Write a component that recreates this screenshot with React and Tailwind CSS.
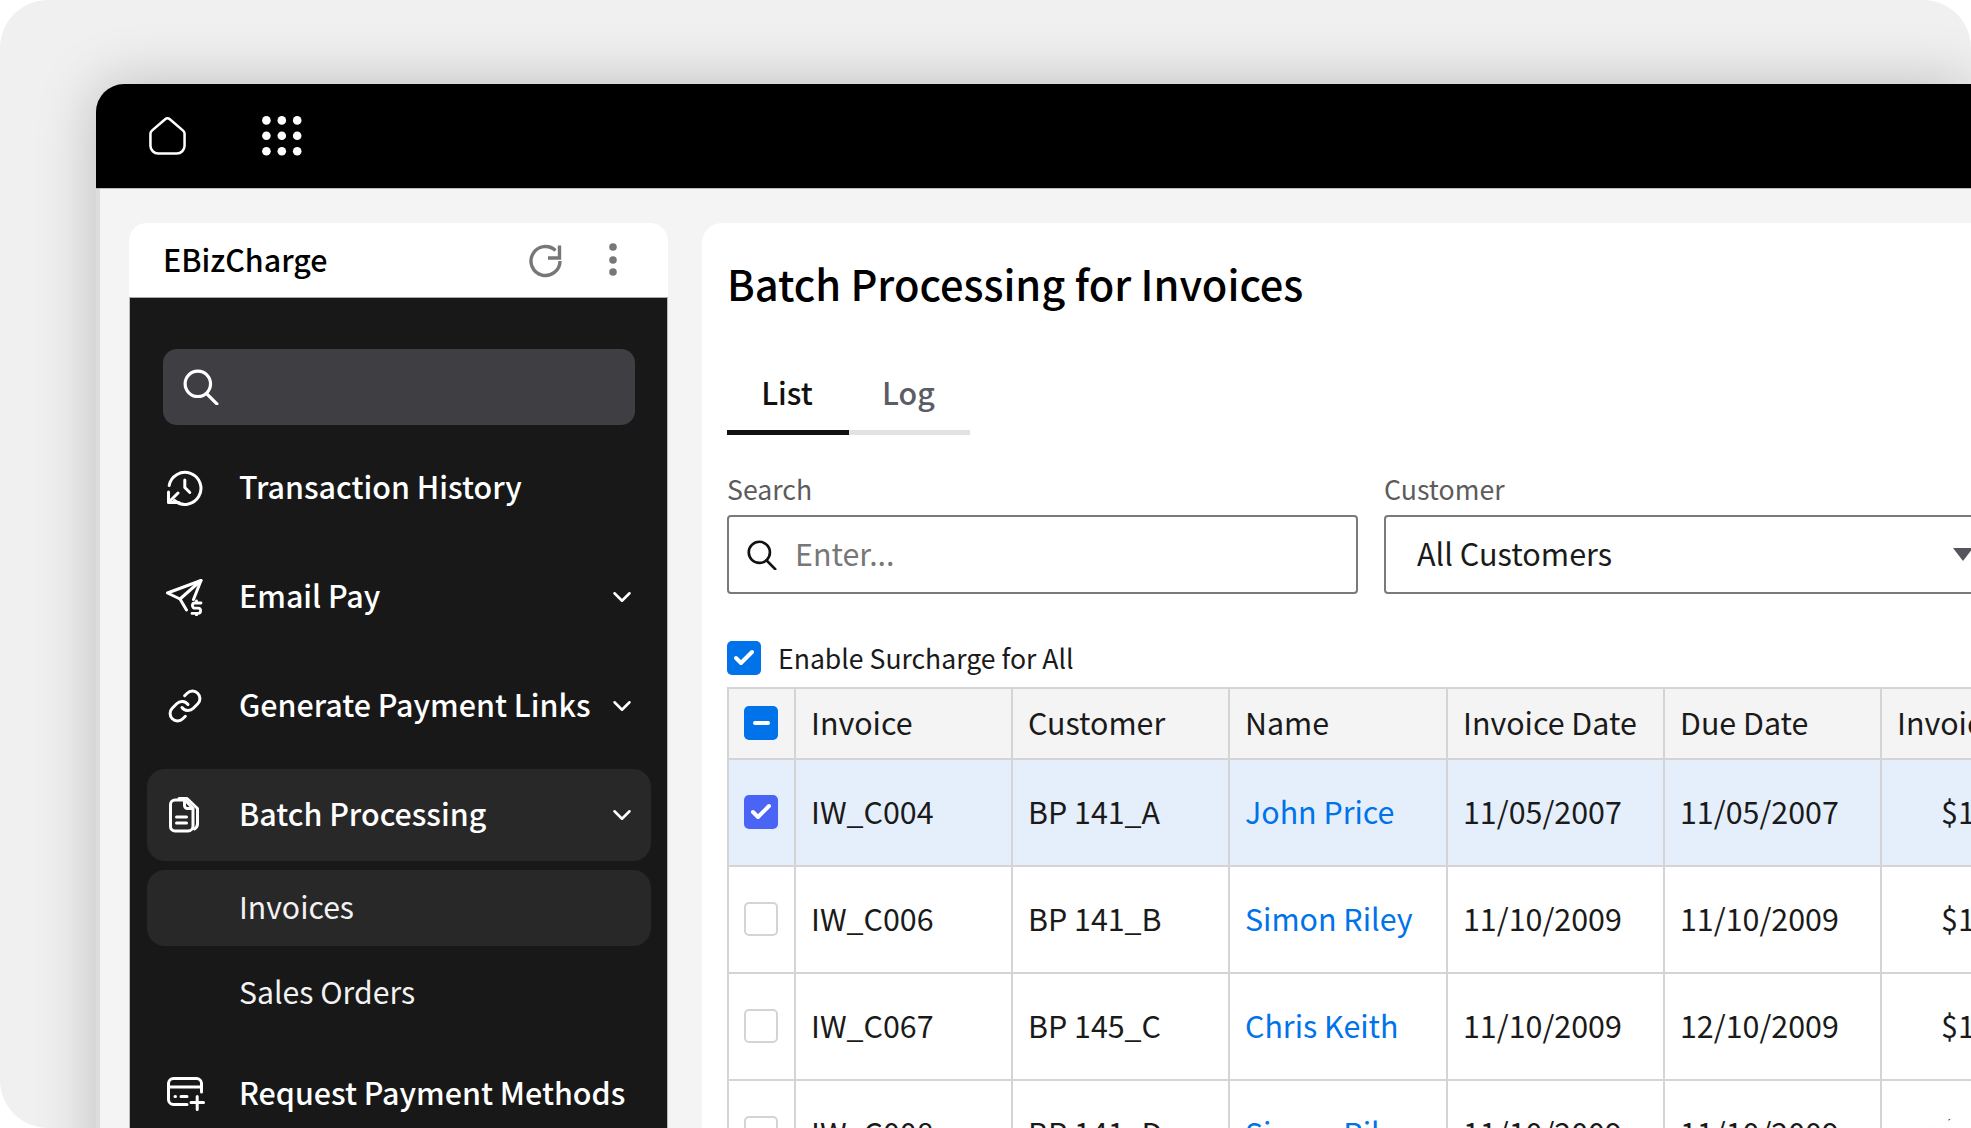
import { ChevronDown, Check, Link as LinkIcon } from "lucide-react";

const rows = [
  { id: "IW_C004", customer: "BP 141_A", name: "John Price", invoiceDate: "11/05/2007", dueDate: "11/05/2007", amount: "$1,250.00", selected: true },
  { id: "IW_C006", customer: "BP 141_B", name: "Simon Riley", invoiceDate: "11/10/2009", dueDate: "11/10/2009", amount: "$1,250.00" },
  { id: "IW_C067", customer: "BP 145_C", name: "Chris Keith", invoiceDate: "11/10/2009", dueDate: "12/10/2009", amount: "$1,250.00" },
  { id: "IW_C008", customer: "BP 141_D", name: "Simon Riley", invoiceDate: "11/10/2009", dueDate: "11/10/2009", amount: "$1,250.00" },
];

function HomeIcon() {
  return (
    <svg width="39" height="40" viewBox="0 0 40 40" fill="none" stroke="#fff" strokeWidth="2.6" strokeLinejoin="round">
      <path d="M17.6 2.9a3.4 3.4 0 0 1 4.8 0L36 14.5a4 4 0 0 1 1.5 3V30a8 8 0 0 1-8 8h-19a8 8 0 0 1-8-8V17.5a4 4 0 0 1 1.5-3Z" />
    </svg>
  );
}

function DotsGrid() {
  const points = [4.4, 19.8, 35.2];
  return (
    <svg width="40" height="40" viewBox="0 0 40 40" fill="#fff">
      {points.map((y) => points.map((x) => <circle key={`${x}-${y}`} cx={x} cy={y} r="4.3" />))}
    </svg>
  );
}

function RefreshIcon() {
  return (
    <svg width="36" height="36" viewBox="0 0 36 36" fill="none" stroke="#777" strokeWidth="3.4">
      <path d="M27.5 8.5A14.5 14.5 0 1 0 32 19" />
      <path d="M31.5 3.5v12.5H20" />
    </svg>
  );
}

function SearchIcon({ color, size }) {
  return (
    <svg width={size} height={size} viewBox="0 0 34 34" fill="none" stroke={color} strokeWidth="3" strokeLinecap="round">
      <circle cx="14" cy="14" r="12" />
      <path d="M22 23l10 10" />
    </svg>
  );
}

function HistoryIcon() {
  return (
    <svg width="36" height="36" viewBox="0 0 36 36" fill="none" stroke="#fff" strokeWidth="3" strokeLinecap="round" strokeLinejoin="round">
      <path d="M2.2 15.5A16 16 0 1 1 7.5 30.5" />
      <path d="M1.5 22v10.5H12M1.5 32.5 11 23" />
      <path d="M17.8 10v7.5l5 5" />
    </svg>
  );
}

function SendDollarIcon() {
  return (
    <svg width="37" height="37" viewBox="0 0 37 37" fill="none" stroke="#fff" strokeWidth="3" strokeLinecap="round" strokeLinejoin="round" className="-ml-[1px]">
      <path d="M20.5 31 14 20 1.5 14 35 1.5l-7.5 19" />
      <path d="M14 20 35 1.5" />
      <path d="M35 24h-6a2.6 2.6 0 0 0 0 5.2h3a2.6 2.6 0 0 1 0 5.2h-6M30.5 22v1.5M30.5 35v1" strokeWidth="2.8" />
    </svg>
  );
}

function DocsIcon() {
  return (
    <svg width="30" height="36" viewBox="0 0 30 36" fill="none" stroke="#fff" strokeWidth="3" strokeLinecap="round" strokeLinejoin="round" className="ml-[2px]">
      <path d="M6 3h10l8 8.500V29a5 5 0 0 1-5 5H6a4.500 4.500 0 0 1-4.500-4.500V7.500A4.500 4.500 0 0 1 6 3Z" />
      <path d="M15.500 3.500v5a3 3 0 0 0 3 3h5" />
      <path d="M10 1.500h8l10.500 10v15a6 6 0 0 1-3 5.500" />
      <path d="M7.500 20h10M7.500 26h10" />
    </svg>
  );
}

function CardPlusIcon() {
  return (
    <svg width="38" height="34" viewBox="0 0 38 34" fill="none" stroke="#fff" strokeWidth="3" strokeLinecap="round" strokeLinejoin="round">
      <path d="M34.500 15V6.500a5 5 0 0 0-5-5h-23a5 5 0 0 0-5 5v16a5 5 0 0 0 5 5H20" />
      <path d="M1.500 10h33" />
      <path d="M8 19.500h.5M14 19.500h6" />
      <path d="M24 25.500h12.500M30.200 19.500v13" />
    </svg>
  );
}

function NavItem({ icon, label, chevron, active }) {
  return (
    <div className={`flex h-[92px] items-center rounded-[18px] pl-[20px] pr-[14px] text-[30.4px] font-medium text-white ${active ? "bg-[#282828]" : ""}`}>
      <span className="flex w-[72px] shrink-0 items-center">{icon}</span>
      <span className="flex-1 whitespace-nowrap pb-[3px]">{label}</span>
      {chevron && <ChevronDown size={30} strokeWidth={2} color="#fff" />}
    </div>
  );
}

function SubItem({ label, active }) {
  return (
    <div className={`flex h-[76px] items-center rounded-[18px] pb-[2px] pl-[92px] text-[30.2px] text-[#f2f2f2] ${active ? "bg-[#282828]" : ""}`}>
      {label}
    </div>
  );
}

function Sidebar() {
  return (
    <aside className="w-[539px] shrink-0">
      <div className="flex h-[75px] items-center justify-between rounded-t-[18px] border-b border-[#aaa] bg-white pl-[34px] pr-[51px]">
        <span className="text-[30.4px] font-medium text-black">EBizCharge</span>
        <div className="flex items-center gap-[45px]">
          <RefreshIcon />
          <svg width="8" height="36" viewBox="0 0 8 36" fill="#777">
            <circle cx="4" cy="5" r="3.8" />
            <circle cx="4" cy="18" r="3.8" />
            <circle cx="4" cy="30" r="3.8" />
          </svg>
        </div>
      </div>
      <div className="flex h-[900px] flex-col gap-[17px] border-x border-[#bbb] bg-[#181818] pl-[17px] pr-[16px] pt-[51px]">
        <div className="mx-[16px] flex h-[76px] items-center rounded-[14px] bg-[#3f3f43] pl-[20px]">
          <SearchIcon color="#fff" size={36} />
        </div>
        <NavItem icon={<HistoryIcon />} label="Transaction History" />
        <NavItem icon={<SendDollarIcon />} label="Email Pay" chevron />
        <NavItem icon={<LinkIcon size={36} strokeWidth={2} color="#fff" />} label="Generate Payment Links" chevron />
        <div className="flex flex-col gap-[9px]">
          <NavItem icon={<DocsIcon />} label="Batch Processing" chevron active />
          <SubItem label="Invoices" active />
          <SubItem label="Sales Orders" />
        </div>
        <NavItem icon={<CardPlusIcon />} label="Request Payment Methods" />
      </div>
    </aside>
  );
}

function Checkbox({ kind }) {
  if (kind === "checked") {
    return (
      <span className="flex h-[34px] w-[34px] items-center justify-center rounded-[5px] bg-[#0073ea]">
        <Check size={24} strokeWidth={4} color="#fff" />
      </span>
    );
  }
  if (kind === "row") {
    return (
      <span className="flex h-[34px] w-[34px] items-center justify-center rounded-[5px] bg-[#4a64f5]">
        <Check size={24} strokeWidth={4} color="#fff" />
      </span>
    );
  }
  if (kind === "mixed") {
    return (
      <span className="flex h-[34px] w-[34px] items-center justify-center rounded-[5px] bg-[#0073ea]">
        <span className="h-[4px] w-[17px] rounded-full bg-white" />
      </span>
    );
  }
  return <span className="block h-[34px] w-[34px] rounded-[5px] border-2 border-[#d4d4d4] bg-white" />;
}

const th = "border-2 border-[#d4d4d4] px-[15px] pb-[1px] text-left text-[30.4px] font-normal text-[#1a1a1a]";
const td = "border-2 border-[#d4d4d4] px-[15px] pb-[1px] text-[30.4px] text-[#1a1a1a]";

function InvoiceTable() {
  return (
    <table className="w-[1364px] table-fixed border-collapse">
      <colgroup>
        <col className="w-[67px]" />
        <col className="w-[217px]" />
        <col className="w-[217px]" />
        <col className="w-[218px]" />
        <col className="w-[217px]" />
        <col className="w-[217px]" />
        <col className="w-[211px]" />
      </colgroup>
      <thead>
        <tr className="h-[71px] bg-[#f4f4f4]">
          <th className={th}><Checkbox kind="mixed" /></th>
          <th className={th}>Invoice</th>
          <th className={th}>Customer</th>
          <th className={th}>Name</th>
          <th className={th}>Invoice Date</th>
          <th className={th}>Due Date</th>
          <th className={`${th} whitespace-nowrap`}>Invoice Amount</th>
        </tr>
      </thead>
      <tbody>
        {rows.map((row) => (
          <tr key={row.id} className={`h-[107px] ${row.selected ? "bg-[#e5effc]" : "bg-white"}`}>
            <td className={td}><Checkbox kind={row.selected ? "row" : "empty"} /></td>
            <td className={td}>{row.id}</td>
            <td className={td}>{row.customer}</td>
            <td className={`${td} text-[#0073ea]`}>{row.name}</td>
            <td className={td}>{row.invoiceDate}</td>
            <td className={td}>{row.dueDate}</td>
            <td className={`${td} text-right`}>{row.amount}</td>
          </tr>
        ))}
      </tbody>
    </table>
  );
}

function MainPanel() {
  return (
    <main className="min-w-0 flex-1 overflow-hidden rounded-tl-[20px] bg-white pl-[25px] pt-[31px]">
      <h1 className="text-[41.6px] font-medium leading-[58px] text-black">Batch Processing for Invoices</h1>

      {/* Tabs */}
      <div className="mt-[49px] flex w-[243px] border-b-[5px] border-[#e2e2e2] text-[30.4px] font-medium">
        <span className="relative flex h-[69px] w-[122px] items-center justify-center pb-[6px] pr-[2px] text-[#111]">
          List
          <span className="absolute bottom-[-5px] left-0 h-[5px] w-full bg-[#111]" />
        </span>
        <span className="flex h-[69px] flex-1 items-center pb-[6px] pl-[33px] text-[#5c5c66]">Log</span>
      </div>

      {/* Filters */}
      <div className="mt-[36px] flex gap-[26px]">
        <div className="w-[631px] shrink-0">
          <div className="mb-[8px] text-[26.7px] leading-[36px] text-[#5c5c5c]">Search</div>
          <div className="flex h-[79px] items-center rounded-[4px] border-2 border-[#7a7a7a] pl-[18px]">
            <SearchIcon color="#111" size={30} />
            <span className="ml-[18px] pb-[2px] text-[30.4px] text-[#777]">Enter...</span>
          </div>
        </div>
        <div className="w-[640px] shrink-0">
          <div className="mb-[8px] text-[26.7px] leading-[36px] text-[#5c5c5c]">Customer</div>
          <div className="flex h-[79px] items-center justify-between rounded-[4px] border-2 border-[#7a7a7a] pl-[31px] pr-[49px]">
            <span className="pb-[2px] text-[30.6px] text-[#1a1a1a]">All Customers</span>
            <span className="h-0 w-0 border-x-[10px] border-t-[13px] border-x-transparent border-t-[#55555c]" />
          </div>
        </div>
      </div>

      <div className="mt-[47px] flex items-center gap-[17px]">
        <Checkbox kind="checked" />
        <span className="text-[26.6px] leading-[34px] text-[#1a1a1a]">Enable Surcharge for All</span>
      </div>

      <div className="mt-[12px]">
        <InvoiceTable />
      </div>
    </main>
  );
}

export default function App() {
  return (
    <div className="h-[1128px] w-full overflow-hidden bg-white font-['Noto_Sans_CJK_SC','Liberation_Sans',sans-serif]">
      <div className="h-full overflow-hidden rounded-[48px] bg-[#f0f0f0] pl-[96px] pt-[84px]">
        <div className="h-[1300px] rounded-tl-[28px] shadow-[0_0_60px_rgba(0,0,0,0.22)]">
          {/* Top bar */}
          <header className="flex h-[105px] items-center gap-[75px] rounded-tl-[28px] border-b border-[#bbb] bg-black pl-[52px]">
            <HomeIcon />
            <DotsGrid />
          </header>

          {/* Body */}
          <div className="flex h-[1195px] gap-[34px] border-l-4 border-[#dcdcdc] bg-[#f4f4f4] pl-[29px] pt-[34px]">
            <Sidebar />
            <MainPanel />
          </div>
        </div>
      </div>
    </div>
  );
}
